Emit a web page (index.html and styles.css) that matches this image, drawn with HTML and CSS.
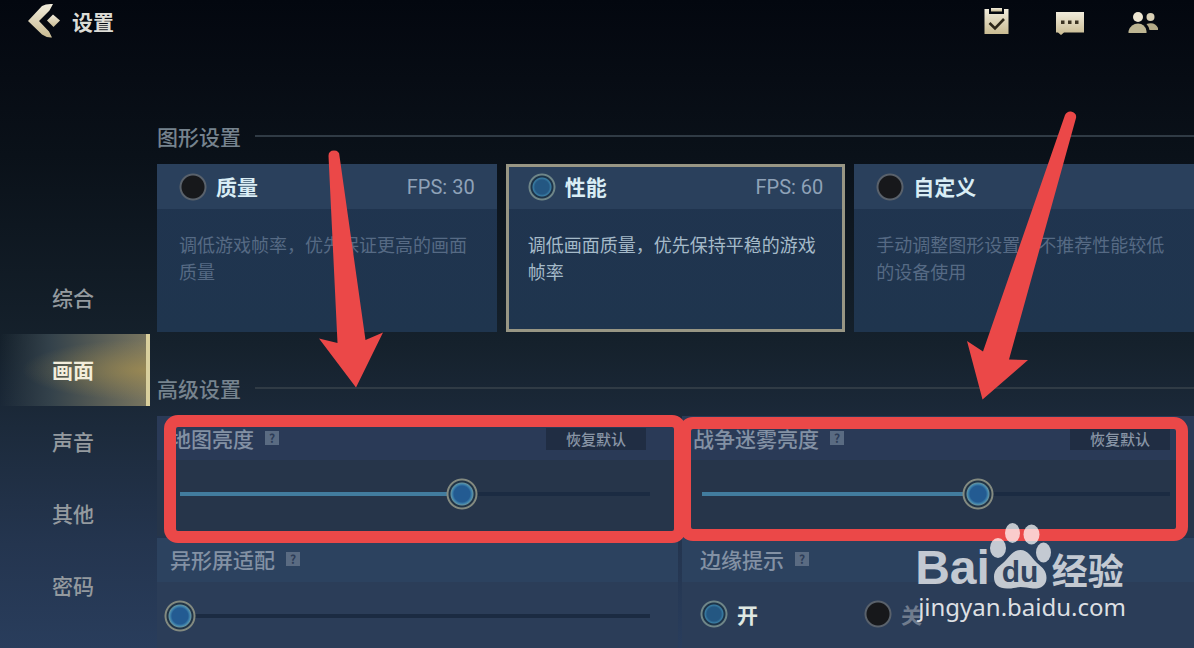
FILE: index.html
```html
<!DOCTYPE html>
<html lang="zh-CN">
<head>
<meta charset="utf-8">
<meta name="viewport" content="width=device-width, initial-scale=1">
<title>设置</title>
<link rel="stylesheet" href="styles.css">
</head>
<body>
<div class="page">
  <header class="topbar">
    <button class="back" type="button">
      <svg class="back-icon" viewBox="0 0 32 36" aria-hidden="true">
        <defs><linearGradient id="gold" x1="0" y1="0" x2="0" y2="1"><stop offset="0" stop-color="#f1ecdc"/><stop offset="1" stop-color="#c9bb92"/></linearGradient></defs>
        <path d="M0 18 14 3Q18 0.500 25 1L21.500 7.500 11 18 21 28.500 24 34.500Q19 35 14 31.500Z" fill="url(#gold)"/>
        <path d="M25 11.500 32 17.500 25.500 24 19 17.500Z" fill="url(#gold)"/>
      </svg>
      <span>设置</span>
    </button>
    <nav class="tools" aria-label="工具">
      <button type="button" aria-label="任务">
        <svg class="tool-icon" viewBox="0 0 30 28"><path d="M2.500 2H7V7H22V2H26.500V27H2.500Z" fill="url(#gold)"/><path d="M9 1H20V4.500H9Z" fill="url(#gold)"/><path d="m7.500 16 5.500 5.500 9-9.500" fill="none" stroke="#2c2618" stroke-width="2.600"/></svg>
      </button>
      <button type="button" aria-label="聊天">
        <svg class="tool-icon" viewBox="0 0 30 28"><path d="M1 5H29V25.500H9L6 28 3 25.500H1Z" fill="url(#gold)"/><path d="M6 13.500h3.500v3.500H6zM13 13.500h3.500v3.500H13zM20 13.500h3.500v3.500H20z" fill="#3b3322"/></svg>
      </button>
      <button type="button" aria-label="好友">
        <svg class="tool-icon" viewBox="0 0 30 28"><circle cx="10" cy="10" r="5" fill="#eee6d2"/><circle cx="22.500" cy="10" r="4" fill="#d9d0b5"/><path d="M0.500 26V24Q3 16.500 10 16.500T18.500 24V26Z" fill="#bdb592"/><path d="M18.500 17Q27 14.500 30 21V23H21.500Q20.500 19 18.500 17Z" fill="#b3aa87"/></svg>
      </button>
    </nav>
  </header>

  <div class="layout">
    <nav class="sidebar" aria-label="设置分类">
      <a class="nav-item" href="#general">综合</a>
      <a class="nav-item nav-item--active" href="#display" aria-current="page">画面</a>
      <a class="nav-item" href="#sound">声音</a>
      <a class="nav-item" href="#other">其他</a>
      <a class="nav-item" href="#password">密码</a>
    </nav>

    <main class="content">
      <section>
        <h2 class="section-title">图形设置</h2>
        <div class="cards">
          <label class="card">
            <span class="card-head"><input class="radio" type="radio" name="quality"><span class="card-name">质量</span><span class="fps">FPS: 30</span></span>
            <span class="card-text">调低游戏帧率，优先保证更高的画面质量</span>
          </label>
          <label class="card card--selected">
            <span class="card-head"><input class="radio" type="radio" name="quality" checked><span class="card-name">性能</span><span class="fps">FPS: 60</span></span>
            <span class="card-text">调低画面质量，优先保持平稳的游戏帧率</span>
          </label>
          <label class="card">
            <span class="card-head"><input class="radio" type="radio" name="quality"><span class="card-name">自定义</span></span>
            <span class="card-text">手动调整图形设置，不推荐性能较低的设备使用</span>
          </label>
        </div>
      </section>

      <section class="advanced">
        <h2 class="section-title">高级设置</h2>
        <div class="panels">
          <div class="panel">
            <div class="panel-head"><label for="map">地图亮度</label><span class="help">?</span><button class="reset" type="button">恢复默认</button></div>
            <div class="panel-body"><input class="slider" id="map" type="range" value="60" style="--value:60%"></div>
          </div>
          <div class="panel panel--right">
            <div class="panel-head"><label for="fog">战争迷雾亮度</label><span class="help">?</span><button class="reset" type="button">恢复默认</button></div>
            <div class="panel-body"><input class="slider" id="fog" type="range" value="59" style="--value:59%"></div>
          </div>
          <div class="panel panel--light">
            <div class="panel-head"><label for="notch">异形屏适配</label><span class="help">?</span></div>
            <div class="panel-body"><input class="slider" id="notch" type="range" value="0" style="--value:0%"></div>
          </div>
          <div class="panel panel--light panel--choice" role="radiogroup" aria-labelledby="edge">
            <div class="panel-head"><span id="edge">边缘提示</span><span class="help">?</span></div>
            <div class="panel-body choices">
              <label class="choice choice--on"><input class="radio" type="radio" name="edge" checked>开</label>
              <label class="choice"><input class="radio" type="radio" name="edge">关</label>
            </div>
          </div>
        </div>
      </section>
    </main>
  </div>

  <svg class="marks" viewBox="0 0 1194 648" aria-hidden="true">
    <g fill="none" stroke="#eb4848" stroke-width="12">
      <rect x="170" y="421" width="510" height="116" rx="8"/>
      <rect x="685" y="423" width="497" height="112" rx="8"/>
    </g>
    <g fill="#eb4848">
      <path d="M328.500 156Q328.500 150.500 334 150.500T339.500 156L365.500 340 383 332.500 356 387.500 319 338.500 337.500 343Z"/>
      <path d="M1065 115Q1067 111 1071 111.500 1077 113 1076 118L1009 359.500 1028 360 982.500 399.500 967 341 983 351.500Z"/>
    </g>
  </svg>

  <div class="watermark">
    <div class="brand">
      <span class="brand-latin">Bai</span>
      <svg class="paw" viewBox="0 0 62 68" aria-hidden="true">
        <g fill="#fff" fill-opacity=".72">
          <ellipse cx="8" cy="26" rx="8" ry="10"/>
          <ellipse cx="22.500" cy="11" rx="7.500" ry="10"/>
          <ellipse cx="41.500" cy="12.500" rx="8" ry="10"/>
          <ellipse cx="53.500" cy="30.500" rx="7.500" ry="10"/>
          <path d="M30.500 28C38 28 41 35 47 41 53 46 56.500 49 56.500 56 56.500 64 50 67 43 66.500 38 66 35 65 30.500 65S22 67 17 66.500C9 66.500 4 63 4 55 4 48 8 45 13 41 19 36 22 28 30.500 28Z"/>
        </g>
        <text class="paw-text" x="30" y="60" text-anchor="middle">du</text>
      </svg>
      <span class="brand-cjk">经验</span>
    </div>
    <div class="brand-url">jingyan.baidu.com</div>
  </div>
</div>
</body>
</html>
```
FILE: styles.css
```css
* { box-sizing: border-box; }

body {
  margin: 0;
  background: #253650;
  color: #8592a3;
  font-family: "Noto Sans CJK SC", sans-serif;
  font-size: 21px;
}

button {
  border: 0;
  padding: 0;
  background: none;
  color: inherit;
  font: inherit;
}

.page {
  position: relative;
  height: 100vh;
  overflow: hidden;
  background: linear-gradient(#03070f 0, #070c14 12%, #0a1119 24%, #15212c 53%, #1c2a3b 66%, #24354f 84%, #293d5c 100%);
}

.topbar {
  display: flex;
  justify-content: space-between;
  align-items: center;
  height: 42px;
  padding: 0 36px 0 28px;
}

.back {
  display: flex;
  align-items: center;
  gap: 12px;
  color: #dcdcd6;
  font-weight: 700;
}

.back-icon { width: 32px; height: 36px; }

.tools { display: flex; gap: 43px; }
.tools button { display: flex; }
.tool-icon { width: 30px; height: 28px; }

.layout {
  display: grid;
  grid-template-columns: 150px minmax(0, 1fr);
  column-gap: 7px;
}

.sidebar {
  padding-top: 220px;
}

.nav-item {
  display: flex;
  align-items: center;
  height: 72px;
  padding: 0 0 3px 52px;
  color: #949a9f;
  font-weight: 500;
  text-decoration: none;
}

.nav-item--active {
  border-right: 4px solid #d9cf9d;
  background:
    radial-gradient(ellipse at 100% 50%, rgba(170, 146, 78, .65), transparent 60%),
    linear-gradient(90deg, transparent, #34424b 35%, #77745f);
  color: #f3eddb;
  font-weight: 700;
}

.content { padding-top: 78px; }

.section-title {
  display: flex;
  align-items: center;
  gap: 14px;
  margin: 0 0 12px;
  color: #76838e;
  font-size: 21px;
  font-weight: 500;
  line-height: 32px;
}

.section-title::after {
  content: "";
  flex: 1;
  height: 2px;
  background: #303b45;
}

.cards {
  display: grid;
  grid-template-columns: repeat(3, minmax(0, 1fr));
  gap: 9px;
}

.card {
  display: block;
  min-height: 168px;
  background: linear-gradient(#20344f, #1f354e);
}

.card--selected { outline: 3px solid #989684; outline-offset: -3px; }

.card-head {
  display: flex;
  align-items: center;
  gap: 9px;
  height: 45px;
  padding: 0 22px;
  background: #2a405c;
}

.card-name {
  padding-bottom: 2px;
  color: #d9edf5;
  font-weight: 700;
}

.fps {
  margin-left: auto;
  color: #8fa2b8;
  font-family: Roboto, sans-serif;
  font-size: 20px;
}

.card-text {
  display: block;
  padding: 22px;
  color: #566a84;
  font-size: 18px;
  line-height: 27px;
}

.card--selected .card-text { color: #a5bac9; }

.radio {
  appearance: none;
  flex: none;
  width: 28px;
  height: 28px;
  margin: 0;
  border-radius: 50%;
  background: radial-gradient(circle, #17181b 0 11px, #59616b 12px 13px, transparent 14px);
}

.radio:checked {
  background: radial-gradient(circle, #245782 0 7px, #397da4 9px, #1d3449 10px 11px, #6f8688 12px 13px, transparent 14px);
}

.advanced { margin-top: 40px; }

.panels {
  display: grid;
  grid-template-columns: minmax(0, 521fr) minmax(0, 512fr);
  gap: 2px 4px;
}

.panel { min-height: 120px; background: #26354a; }
.panel--light { background: #2b3d58; }

.panel-head {
  display: flex;
  align-items: center;
  gap: 11px;
  height: 44px;
  padding: 0 32px 0 13px;
  background: #2a3a57;
  color: #8391a4;
  font-weight: 500;
}

.panel--light .panel-head { padding-bottom: 2px; background: #2c425f; }
.panel--right .panel-head { padding: 0 24px 0 11px; }
.panel--choice .panel-head { padding-left: 18px; }

.help {
  display: grid;
  place-items: center;
  width: 14px;
  height: 14px;
  background: #5a6b82;
  color: #2c3c57;
  font-size: 12px;
  font-weight: 700;
  line-height: 14px;
}

.reset {
  width: 100px;
  height: 22px;
  margin: 2px 0 0 auto;
  background: #202d43;
  color: #8995a6;
  font-size: 15px;
  font-weight: 500;
  line-height: 22px;
}

.panel-body { padding: 18px 12px 0 7px; }
.panel--right .panel-body { padding: 18px 8px 0 4px; }
.panel--choice .panel-body { padding: 17px 18px 0; }

.slider {
  appearance: none;
  display: block;
  width: 100%;
  height: 32px;
  margin: 0;
  padding: 0;
  background: none;
}

.slider::-webkit-slider-runnable-track {
  height: 32px;
  background:
    linear-gradient(90deg, #427c9e var(--value), #1b2b42 var(--value)) center / calc(100% - 32px) 4px no-repeat;
}

.slider::-webkit-slider-thumb {
  appearance: none;
  width: 32px;
  height: 32px;
  border-radius: 50%;
  background: radial-gradient(circle, #235b92 0 8px, #4287af 10px, #64909d 11px, #213446 12px 13px, #838a80 14px 15px, transparent 16px);
}

.choices { display: flex; gap: 106px; }

.choice {
  display: flex;
  align-items: center;
  gap: 9px;
  height: 30px;
  color: #707c8e;
  font-weight: 700;
}

.choice--on { color: #dfe8e2; }

.marks {
  position: absolute;
  inset: 0 auto auto 0;
  width: 100%;
  pointer-events: none;
}

.watermark {
  position: absolute;
  right: 68px;
  bottom: 24px;
  color: rgba(255, 255, 255, .72);
}

.brand {
  display: flex;
  align-items: flex-end;
  height: 68px;
}

.brand-latin {
  font: 700 48px/44px "Liberation Sans", sans-serif;
}

.paw { width: 62px; height: 68px; }

.paw-text {
  fill: #30435f;
  font: 700 30px "Liberation Sans", sans-serif;
}

.brand-cjk {
  font: 700 36px/42px "Noto Sans CJK SC", sans-serif;
}

.brand-url {
  padding-left: 3px;
  color: rgba(255, 255, 255, .85);
  font: 24px/34px "Noto Sans", sans-serif;
}
```
